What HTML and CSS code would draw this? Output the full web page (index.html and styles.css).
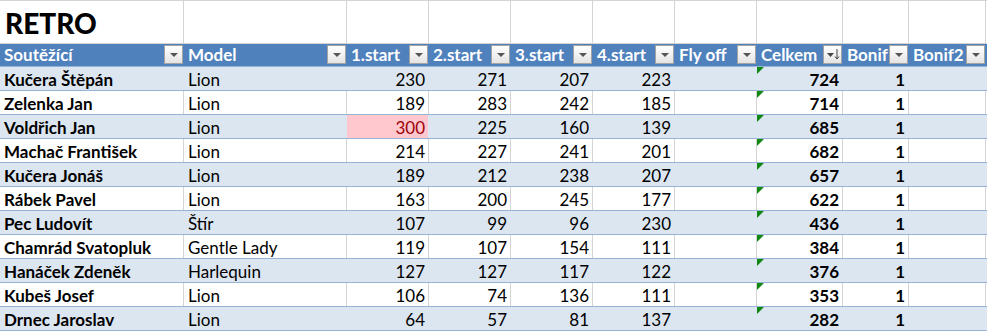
FILE: index.html
```html
<!DOCTYPE html>
<html lang="cs">
<head>
<meta charset="utf-8">
<title>RETRO</title>
<link rel="stylesheet" href="styles.css">
</head>
<body>
<div class="sheet">
  <div class="row title-row">
    <div class="c title">RETRO</div><div class="c"></div><div class="c"></div><div class="c"></div><div class="c"></div><div class="c"></div><div class="c"></div><div class="c"></div><div class="c"></div><div class="c"></div><div class="c"></div>
  </div>
  <div class="row head">
    <div class="c">Soutěžící<span class="fb"></span></div>
    <div class="c">Model<span class="fb"></span></div>
    <div class="c">1.start<span class="fb"></span></div>
    <div class="c">2.start<span class="fb"></span></div>
    <div class="c">3.start<span class="fb"></span></div>
    <div class="c">4.start<span class="fb"></span></div>
    <div class="c">Fly off<span class="fb"></span></div>
    <div class="c">Celkem<span class="fb sort"><svg width="17" height="17" viewBox="0 0 17 17"><path d="M3 7h7l-3.5 4z" fill="#444"/><path d="M13 3v10M11 10.5l2 2.5 2-2.5" stroke="#444" stroke-width="1" fill="none"/></svg></span></div>
    <div class="c">Bonif<span class="fb"></span></div>
    <div class="c">Bonif2<span class="fb"></span></div>
    <div class="c"></div>
  </div>
  <div class="row band"><div class="c b">Kučera Štěpán</div><div class="c">Lion</div><div class="c n">230</div><div class="c n">271</div><div class="c n">207</div><div class="c n">223</div><div class="c"></div><div class="c n b tri">724</div><div class="c n b">1</div><div class="c"></div><div class="c"></div></div>
  <div class="row"><div class="c b">Zelenka Jan</div><div class="c">Lion</div><div class="c n">189</div><div class="c n">283</div><div class="c n">242</div><div class="c n">185</div><div class="c"></div><div class="c n b tri">714</div><div class="c n b">1</div><div class="c"></div><div class="c"></div></div>
  <div class="row band"><div class="c b">Voldřich Jan</div><div class="c">Lion</div><div class="c n bad">300</div><div class="c n">225</div><div class="c n">160</div><div class="c n">139</div><div class="c"></div><div class="c n b tri">685</div><div class="c n b">1</div><div class="c"></div><div class="c"></div></div>
  <div class="row"><div class="c b">Machač František</div><div class="c">Lion</div><div class="c n">214</div><div class="c n">227</div><div class="c n">241</div><div class="c n">201</div><div class="c"></div><div class="c n b tri">682</div><div class="c n b">1</div><div class="c"></div><div class="c"></div></div>
  <div class="row band"><div class="c b">Kučera Jonáš</div><div class="c">Lion</div><div class="c n">189</div><div class="c n">212</div><div class="c n">238</div><div class="c n">207</div><div class="c"></div><div class="c n b tri">657</div><div class="c n b">1</div><div class="c"></div><div class="c"></div></div>
  <div class="row"><div class="c b">Rábek Pavel</div><div class="c">Lion</div><div class="c n">163</div><div class="c n">200</div><div class="c n">245</div><div class="c n">177</div><div class="c"></div><div class="c n b tri">622</div><div class="c n b">1</div><div class="c"></div><div class="c"></div></div>
  <div class="row band"><div class="c b">Pec Ludovít</div><div class="c">Štír</div><div class="c n">107</div><div class="c n">99</div><div class="c n">96</div><div class="c n">230</div><div class="c"></div><div class="c n b tri">436</div><div class="c n b">1</div><div class="c"></div><div class="c"></div></div>
  <div class="row"><div class="c b">Chamrád Svatopluk</div><div class="c">Gentle Lady</div><div class="c n">119</div><div class="c n">107</div><div class="c n">154</div><div class="c n">111</div><div class="c"></div><div class="c n b tri">384</div><div class="c n b">1</div><div class="c"></div><div class="c"></div></div>
  <div class="row band"><div class="c b">Hanáček Zdeněk</div><div class="c">Harlequin</div><div class="c n">127</div><div class="c n">127</div><div class="c n">117</div><div class="c n">122</div><div class="c"></div><div class="c n b tri">376</div><div class="c n b">1</div><div class="c"></div><div class="c"></div></div>
  <div class="row"><div class="c b">Kubeš Josef</div><div class="c">Lion</div><div class="c n">106</div><div class="c n">74</div><div class="c n">136</div><div class="c n">111</div><div class="c"></div><div class="c n b tri">353</div><div class="c n b">1</div><div class="c"></div><div class="c"></div></div>
  <div class="row band last"><div class="c b">Drnec Jaroslav</div><div class="c">Lion</div><div class="c n">64</div><div class="c n">57</div><div class="c n">81</div><div class="c n">137</div><div class="c"></div><div class="c n b tri">282</div><div class="c n b">1</div><div class="c"></div><div class="c"></div></div>
</div>
</body>
</html>
```

FILE: styles.css
```css
html, body {
  margin: 0;
  padding: 0;
  background: #ffffff;
}
body {
  font-family: Lato, "Open Sans", sans-serif;
  font-size: 17px;
  color: #000;
}
.sheet {
  width: 987px;
  overflow: hidden;
  border-top: 1px solid #d4d4d4;
}
.row {
  display: grid;
  grid-template-columns: 184px 163px 82px 82px 82px 82px 82px 86px 66px 77px 1fr;
  height: 24px;
  box-sizing: border-box;
  border-top: 1px solid #95b3d7;
  background: #ffffff;
}
.row.band {
  background: #dce6f1;
}
.row.last {
  height: 25px;
  border-bottom: 1px solid #95b3d7;
}
.c {
  position: relative;
  box-sizing: border-box;
  border-right: 1px solid #d4d4d4;
  padding: 1px 4px 0;
  line-height: 23px;
  white-space: nowrap;
  overflow: hidden;
}
.band .c {
  border-right-color: #dce6f1;
}
.n {
  text-align: right;
  padding-right: 3px;
}
.b {
  font-weight: 700;
}
.bad {
  background: #ffc7ce;
  color: #9c0006;
}
.tri::before {
  content: "";
  position: absolute;
  left: 0;
  top: 0;
  border-top: 7px solid #118811;
  border-right: 7px solid transparent;
}
.title-row {
  height: 43px;
  border-top: none;
  border-bottom: 1px solid #d4d4d4;
}
.title-row .c {
  line-height: 42px;
  padding-top: 1px;
}
.title {
  font-size: 28px;
  font-weight: 900;
  padding-left: 5px;
}
.head {
  height: 22px;
  border-top: none;
  background: #4f81bd;
  color: #ffffff;
  font-weight: 700;
}
.head .c {
  border-right-color: #4f81bd;
  line-height: 22px;
  padding-top: 0;
}
.fb {
  position: absolute;
  right: 0;
  top: 1px;
  width: 19px;
  height: 19px;
  box-sizing: border-box;
  border: 1px solid #a3a3a3;
  background: linear-gradient(#ffffff, #e4e4e4);
}
.fb::after {
  content: "";
  position: absolute;
  left: 5px;
  top: 7px;
  border-left: 4px solid transparent;
  border-right: 4px solid transparent;
  border-top: 4px solid #555;
}
.fb.sort::after {
  display: none;
}
.fb svg {
  display: block;
  margin: 0;
}
```
